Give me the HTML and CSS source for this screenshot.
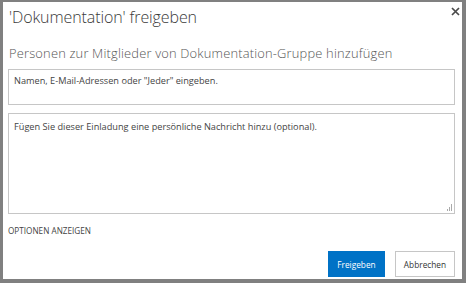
FILE: index.html
```html
<!DOCTYPE html>
<html lang="de">
<head>
<meta charset="utf-8">
<link rel="stylesheet" href="styles.css">
</head>
<body>
<div class="dialog">
  <div class="header">
    <h1 class="title">'Dokumentation' freigeben</h1>
    <span class="close" aria-label="Schließen">
      <svg width="9" height="9" viewBox="0 0 9 9"><path d="M1 1 L8 8 M8 1 L1 8" stroke="#4a4a4a" stroke-width="1.7"/></svg>
    </span>
  </div>
  <div class="label">Personen zur Mitglieder von Dokumentation-Gruppe hinzufügen</div>
  <div class="field people">Namen, E-Mail-Adressen oder "Jeder" eingeben.</div>
  <div class="field message">Fügen Sie dieser Einladung eine persönliche Nachricht hinzu (optional).
    <svg class="grip" width="6" height="7" viewBox="0 0 6 7"><rect x="5" y="0" width="1" height="7" fill="#aaa"/><rect x="3" y="3" width="1" height="4" fill="#aaa"/><rect x="1" y="5" width="1" height="2" fill="#aaa"/></svg>
  </div>
  <div class="options">OPTIONEN ANZEIGEN</div>
  <div class="buttons">
    <button class="btn primary">Freigeben</button>
    <button class="btn">Abbrechen</button>
  </div>
</div>
</body>
</html>
```
FILE: styles.css
```css
html, body {
  margin: 0;
  padding: 0;
  background: #808080;
  font-family: "Open Sans", "Noto Sans", sans-serif;
}
.dialog {
  box-sizing: border-box;
  margin: 2px 4px 4px 3px;
  height: 277px;
  background: #fff;
  padding: 0 7px 0 5px;
  display: flex;
  flex-direction: column;
}
.header {
  display: flex;
  justify-content: space-between;
  align-items: flex-start;
  height: 42px;
  flex: none;
}
.title {
  margin: 4px 0 0 1px;
  font-size: 16px;
  line-height: 22px;
  font-weight: 300;
  color: #3a3a3a;
  letter-spacing: -0.1px;
}
.close {
  margin-top: 5px;
  margin-right: -5px;
  display: flex;
}
.label {
  font-size: 12.9px;
  font-weight: 300;
  color: #555;
  margin-left: 1px;
  height: 25px;
  line-height: 18px;
  letter-spacing: 0.18px;
  flex: none;
}
.field {
  position: relative;
  box-sizing: border-box;
  border: 1px solid #c6c6c6;
  font-size: 9.2px;
  line-height: 12px;
  color: #444;
  padding: 5px 5px 0;
  flex: none;
}
.people {
  height: 36px;
}
.message {
  margin-top: 8px;
  height: 101px;
  padding-top: 7px;
}
.grip {
  position: absolute;
  right: 2px;
  bottom: 2px;
}
.options {
  font-size: 8.2px;
  line-height: 12px;
  color: #444;
  margin-top: 11px;
  height: 12px;
  flex: none;
}
.buttons {
  display: flex;
  justify-content: flex-end;
  gap: 10px;
  margin-top: 14px;
}
.btn {
  box-sizing: border-box;
  height: 26px;
  border: 1px solid #c6c6c6;
  background: #fff;
  color: #333;
  font-family: inherit;
  font-size: 8.3px;
  padding: 0;
  width: 60px;
}
.btn.primary {
  background: #0072c6;
  border-color: #0072c6;
  color: #fff;
  width: 57px;
}
```
